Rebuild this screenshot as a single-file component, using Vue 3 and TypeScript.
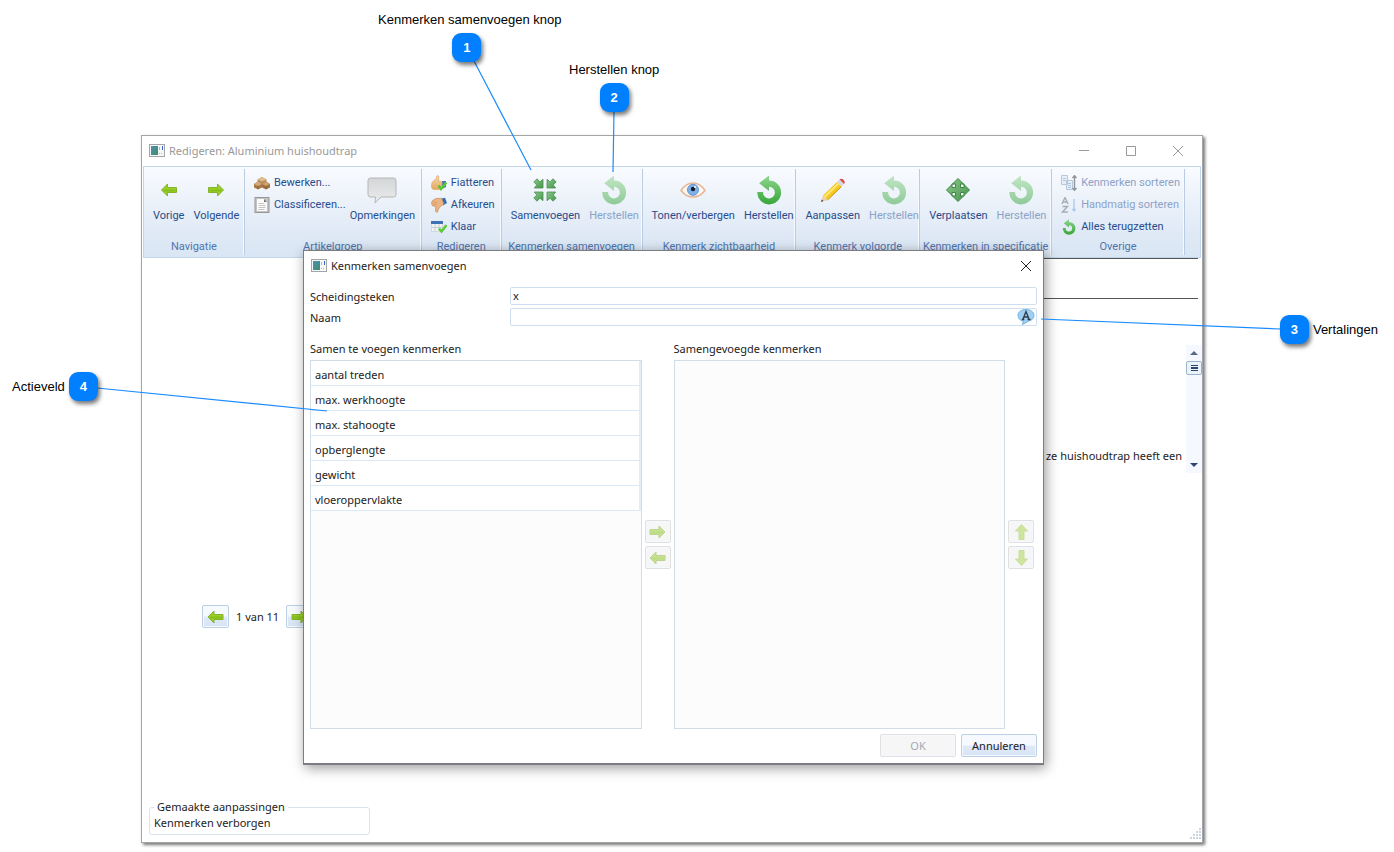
<script setup lang="ts">
import { ref } from 'vue'

interface Tool {
  icon: string
  label: string
  disabled?: boolean
}
interface Group {
  title: string
  small: Tool[]
  large: Tool[]
  name: string
}
interface Callout {
  n: number
  text: string
  place: string
}

const groups: Group[] = [
  {
    title: 'Navigatie',
    name: 'nav',
    small: [],
    large: [
      { icon: 'left', label: 'Vorige' },
      { icon: 'right', label: 'Volgende' },
    ],
  },
  {
    title: 'Artikelgroep',
    name: 'article-group',
    small: [
      { icon: 'boxes', label: 'Bewerken...' },
      { icon: 'doc', label: 'Classificeren...' },
    ],
    large: [{ icon: 'bubble', label: 'Opmerkingen' }],
  },
  {
    title: 'Redigeren',
    name: 'edit',
    small: [
      { icon: 'thumb-up', label: 'Fiatteren' },
      { icon: 'thumb-down', label: 'Afkeuren' },
      { icon: 'done', label: 'Klaar' },
    ],
    large: [],
  },
  {
    title: 'Kenmerken samenvoegen',
    name: 'merge',
    small: [],
    large: [
      { icon: 'merge', label: 'Samenvoegen' },
      { icon: 'undo', label: 'Herstellen', disabled: true },
    ],
  },
  {
    title: 'Kenmerk zichtbaarheid',
    name: 'visible',
    small: [],
    large: [
      { icon: 'eye', label: 'Tonen/verbergen' },
      { icon: 'undo', label: 'Herstellen' },
    ],
  },
  {
    title: 'Kenmerk volgorde',
    name: 'order',
    small: [],
    large: [
      { icon: 'pencil', label: 'Aanpassen' },
      { icon: 'undo', label: 'Herstellen', disabled: true },
    ],
  },
  {
    title: 'Kenmerken in specificatie',
    name: 'spec',
    small: [],
    large: [
      { icon: 'move', label: 'Verplaatsen' },
      { icon: 'undo', label: 'Herstellen', disabled: true },
    ],
  },
  {
    title: 'Overige',
    name: 'other',
    small: [
      { icon: 'sort', label: 'Kenmerken sorteren', disabled: true },
      { icon: 'az', label: 'Handmatig sorteren', disabled: true },
      { icon: 'undo', label: 'Alles terugzetten' },
    ],
    large: [],
  },
]

const features: string[] = [
  'aantal treden',
  'max. werkhoogte',
  'max. stahoogte',
  'opberglengte',
  'gewicht',
  'vloeroppervlakte',
]

const callouts: Callout[] = [
  { n: 1, text: 'Kenmerken samenvoegen knop', place: 'c1' },
  { n: 2, text: 'Herstellen knop', place: 'c2' },
  { n: 3, text: 'Vertalingen', place: 'c3' },
  { n: 4, text: 'Actieveld', place: 'c4' },
]

const separator = ref('x')
const featureName = ref('')
</script>

<template>
  <main class="page">
    <svg class="defs" width="0" height="0" aria-hidden="true">
      <defs>
        <linearGradient id="g-green" x1="0" y1="0" x2="0" y2="1">
          <stop offset="0" stop-color="#8fd68d" />
          <stop offset="1" stop-color="#38a53a" />
        </linearGradient>
        <linearGradient id="g-dark" x1="0" y1="0" x2="1" y2="1">
          <stop offset="0" stop-color="#8bca8b" />
          <stop offset="1" stop-color="#44934a" />
        </linearGradient>
        <linearGradient id="g-grey" x1="0" y1="0" x2="0" y2="1">
          <stop offset="0" stop-color="#d3d5d7" />
          <stop offset="1" stop-color="#ececec" />
        </linearGradient>
        <linearGradient id="g-skin" x1="0" y1="0" x2="0" y2="1">
          <stop offset="0" stop-color="#fbd9a5" />
          <stop offset="1" stop-color="#e3a863" />
        </linearGradient>
        <linearGradient id="g-teal" x1="0" y1="0" x2="1" y2="1">
          <stop offset="0" stop-color="#4f8fb5" />
          <stop offset="1" stop-color="#3f8d68" />
        </linearGradient>
      </defs>
      <symbol id="i-app" viewBox="0 0 16 14">
        <rect x=".5" y=".5" width="15" height="12" fill="#f7f7f7" stroke="#a2a6aa" />
        <rect x="2" y="2" width="7" height="9" fill="url(#g-teal)" />
        <path d="M10.500 3v3" stroke="#9fb7d8" />
        <path d="M13.500 2v4" stroke="#3d67c4" />
        <path d="M10 9.500h4" stroke="#a9c2a9" stroke-dasharray="1 1" />
      </symbol>
      <symbol id="i-right" viewBox="0 0 16 16">
        <path d="M15.500 8 9.500 2v3.500h-9v5h9V14z" fill="#98cf2a" stroke="#85b32b" />
        <path d="M1.500 8.500h12" stroke="#86bf18" stroke-width="2" />
      </symbol>
      <symbol id="i-left" viewBox="0 0 16 16">
        <path d="M.5 8 6.500 2v3.500h9v5h-9V14z" fill="#98cf2a" stroke="#85b32b" />
        <path d="M2.500 8.500h12" stroke="#86bf18" stroke-width="2" />
      </symbol>
      <symbol id="i-up" viewBox="0 0 16 16">
        <path d="M8 .5 2 7h3.500v8.500h5V7H14z" fill="#a8d64a" stroke="#9cc44e" />
      </symbol>
      <symbol id="i-down" viewBox="0 0 16 16">
        <path d="M8 15.500 2 9h3.500V.5h5V9H14z" fill="#a8d64a" stroke="#9cc44e" />
      </symbol>
      <symbol id="i-boxes" viewBox="0 0 16 16">
        <path d="m3.500 4.500 4.500-2.500 4.500 2.500v4L8 11 3.500 8.500z" fill="#b98b58" />
        <path d="m3.500 4.500 4.500 2 4.500-2L8 2z" fill="#ddbb8e" />
        <path d="m0 9 4-2.500L8 9v3.500l-4 2-4-2z" fill="#a97843" />
        <path d="m0 9 4 2 4-2-4-2.500z" fill="#d3aa77" />
        <path d="m8 9 4-2.500L16 9v3.500l-4 2-4-2z" fill="#a07040" />
        <path d="m8 9 4 2 4-2-4-2.500z" fill="#cba06d" />
        <path d="M4 11v3M12 11v3" stroke="#85603a" />
      </symbol>
      <symbol id="i-doc" viewBox="0 0 16 16">
        <rect x="1" y=".5" width="14" height="15" fill="#c4c4c4" stroke="#979797" />
        <path d="M3 2h7l3 3v9H3z" fill="#fbfbfb" />
        <path d="M10 2v3h3z" fill="#777" />
        <path d="M4.500 6.500h6M4.500 8.500h7M4.500 10.500h7M4.500 12.500h6" stroke="#c4c4c4" />
      </symbol>
      <symbol id="i-bubble" viewBox="0 0 32 32">
        <path
          d="M4.500 4h23a2.500 2.500 0 0 1 2.500 2.500v14a2.500 2.500 0 0 1-2.500 2.500H15l-6 6 .5-6h-5A2.500 2.500 0 0 1 2 20.500v-14A2.500 2.500 0 0 1 4.500 4z"
          fill="url(#g-grey)"
          stroke="#b4b6b8"
        />
      </symbol>
      <symbol id="i-thumb-up" viewBox="0 0 16 16">
        <path d="M11 6h4v6l-4 2z" fill="#417ab9" />
        <path
          d="M6 .8c1.500-.5 2 .7 1.700 2L7.300 5.500 11 7v5.500l-3 2H3c-1.800 0-2.500-1.500-2.500-3.500S1 6.500 3 5.500C5 4.500 5.500 2.500 6 .8z"
          fill="url(#g-skin)"
          stroke="#dda666"
          stroke-width=".7"
        />
        <path d="m7.500 10.500 2.500 3.500 5.500-6.500" fill="none" stroke="#55c835" stroke-width="2.500" />
      </symbol>
      <symbol id="i-thumb-down" viewBox="0 0 16 16">
        <path d="M10.500 1.500 14 .7 16 6l-4 2.500z" fill="#356fb0" />
        <path
          d="M1.500 3.500 5 1.500l5.500-.3L12.800 7 9.500 9.500 7.500 12 6.500 15c-1.300.7-2.300-.3-2-2L5 9.500 2 9C.3 8 .2 5 1.500 3.500z"
          fill="#eab483"
          stroke="#c98c5c"
          stroke-width=".7"
        />
        <path d="M2 5.300h4M2 7.300h4" stroke="#cf9464" stroke-width=".7" />
      </symbol>
      <symbol id="i-done" viewBox="0 0 16 16">
        <path d="M.5 4.500h11v8H.5z" fill="#f0f2f4" stroke="#d2d7dd" />
        <path d="M4 5v7M8 5v7M1 8.500h10" stroke="#c7ccd2" />
        <path d="M0 2h12v3H0z" fill="#3d70b5" />
        <path d="m8 9.500 2.500 3L15.500 6" fill="none" stroke="#5ccb3c" stroke-width="2.500" />
      </symbol>
      <symbol id="i-merge" viewBox="0 0 24 24">
        <g fill="url(#g-dark)" stroke="#4c9150" stroke-width=".8">
          <path d="M.8 4 4 .8l3 3 3-2.500V10H1.300l2.500-3z" />
          <path d="M23.200 4 20 .8l-3 3-3-2.500V10h8.700l-2.500-3z" />
          <path d="M.8 20 4 23.200l3-3 3 2.500V14H1.300l2.500 3z" />
          <path d="m23.200 20-3.200 3.200-3-3-3 2.500V14h8.700l-2.500 3z" />
        </g>
      </symbol>
      <symbol id="i-undo" viewBox="0 0 32 32">
        <path
          d="M3.500 18h6.200A6.300 6.300 0 1 0 16 12.500V17L5.500 8.700 16 .5V6a12.700 12.700 0 1 1-12.500 12z"
          fill="url(#g-green)"
        />
      </symbol>
      <symbol id="i-eye" viewBox="0 0 26 18">
        <path d="M1 9.500Q6 2 13 2t12 7.500Q20 16 13 16T1 9.500z" fill="#fdf6f1" stroke="#e6b695" stroke-width="1.600" />
        <circle cx="13" cy="8.800" r="5.500" fill="#7fb0e6" stroke="#6294d2" />
        <circle cx="13" cy="8" r="2.200" fill="#131c2b" />
        <circle cx="15" cy="6" r="1" fill="#fff" />
      </symbol>
      <symbol id="i-pencil" viewBox="0 0 26 26">
        <path d="m1 25 2-6.500 4.500 4.500z" fill="#e9cfa4" />
        <path d="m1 25 .8-2.500L3.500 24z" fill="#444" />
        <path d="M3 18.500 17 5l4.500 4.500L7.500 23z" fill="#f5c91f" />
        <path d="M4.500 20 18.500 6.500" stroke="#fde67a" stroke-width="2" />
        <path d="M7.500 23 21.500 9.500" stroke="#c98f13" />
        <path d="m17 5 2.500-2.500L24 7l-2.500 2.500z" fill="#d5d8dc" />
        <path d="M19.500 2.500C21.500-.2 26.500 4 24 7z" fill="#e04d55" />
      </symbol>
      <symbol id="i-move" viewBox="0 0 24 24">
        <path
          d="m12 .5 5.500 5.500h-3v3.500H18v-3l5.500 5.500-5.500 5.500v-3h-3.500V18h3L12 23.500 6.500 18h3v-3.500H6v3L.5 12 6 6.500v3h3.500V6h-3z"
          fill="url(#g-dark)"
          stroke="#3f8443"
        />
        <path d="m5.500 7 2.500-2M18.500 7 16 5M5.500 17 8 19M18.500 17 16 19" stroke="#4f9a52" stroke-width="1.500" />
      </symbol>
      <symbol id="i-sort" viewBox="0 0 16 16">
        <path d="M.5.5h6v9h-6zM5.500 5.500h6v9h-6z" fill="#dbe9f7" stroke="#7f98b2" />
        <path d="M2 3.500h3M2 5.500h3M7 8.500h3M7 10.500h3M7 12.500h3" stroke="#5f97d3" />
        <path d="M13.500 1v14M11.500 3l2-2.300 2 2.300M11.500 13l2 2.300 2-2.300" fill="none" stroke="#33383e" stroke-width="1.400" />
      </symbol>
      <symbol id="i-az" viewBox="0 0 16 16">
        <path d="m1 7 3-6.500L7 7M2.200 5h3.600M1.500 9.500h5L1.500 15h5.300" fill="none" stroke="#666b70" stroke-width="1.400" />
        <path d="M13 2v11M11.500 12l1.500 2 1.500-2" fill="none" stroke="#6ba2e6" stroke-width="1.300" />
      </symbol>
      <symbol id="i-translate" viewBox="0 0 18 16">
        <path d="M9 .5c4.700 0 8 2.500 8 6 0 3-2.500 5-5.500 5.700L5.500 15.500l1-3.300C3 11.500 1 9.500 1 6.500c0-3.500 3.300-6 8-6z" fill="#9fd0f3" stroke="#72b2e0" />
        <path d="m5.800 10.500 3.200-8 3.200 8M7 8h4M4.800 10.500h2.500M10.500 10.500h3" fill="none" stroke="#2d3b49" stroke-width="1.300" />
      </symbol>
      <symbol id="i-close" viewBox="0 0 12 12">
        <path d="m1 1 10 10M11 1 1 11" fill="none" stroke="currentColor" />
      </symbol>
    </svg>

    <section class="window">
      <header class="titlebar">
        <svg class="app-icon"><use href="#i-app" /></svg>
        <h1>Redigeren: Aluminium huishoudtrap</h1>
        <div class="win-buttons">
          <button type="button" aria-label="Minimaliseren">
            <svg width="12" height="12"><path d="M1 5.500h10" stroke="currentColor" /></svg>
          </button>
          <button type="button" aria-label="Maximaliseren">
            <svg width="12" height="12"><path d="M1.500 1.500h9v9h-9z" fill="none" stroke="currentColor" /></svg>
          </button>
          <button type="button" aria-label="Sluiten">
            <svg width="12" height="12"><use href="#i-close" /></svg>
          </button>
        </div>
      </header>

      <nav class="ribbon">
        <section v-for="g in groups" :key="g.name" class="group" :class="g.name">
          <div class="tools">
            <div v-if="g.small.length" class="small-tools">
              <button v-for="t in g.small" :key="t.label" type="button" class="small" :disabled="t.disabled">
                <svg><use :href="'#i-' + t.icon" /></svg>
                <span>{{ t.label }}</span>
              </button>
            </div>
            <button v-for="t in g.large" :key="t.label" type="button" class="large" :disabled="t.disabled">
              <span class="pic"><svg :class="'p-' + t.icon"><use :href="'#i-' + t.icon" /></svg></span>
              <span>{{ t.label }}</span>
            </button>
          </div>
          <h2>{{ g.title }}</h2>
        </section>
      </nav>

      <div class="content">
        <div class="side">
          <div class="pager">
            <button type="button" class="btn" aria-label="Vorige pagina"><svg><use href="#i-left" /></svg></button>
            <span>1 van 11</span>
            <button type="button" class="btn" aria-label="Volgende pagina"><svg><use href="#i-right" /></svg></button>
          </div>
        </div>
        <div class="article">
          <div class="rule-box"></div>
          <div class="text-area">
            <p>ze huishoudtrap heeft een</p>
            <div class="scrollbar">
              <svg width="8" height="5"><path d="M0 5 4 1l4 4z" fill="#56698a" /></svg>
              <span class="thumb"></span>
              <svg class="end" width="8" height="5"><path d="m0 0 4 4 4-4z" fill="#2c4570" /></svg>
            </div>
          </div>
        </div>
      </div>

      <footer class="bottom">
        <fieldset>
          <legend>Gemaakte aanpassingen</legend>
          <p>Kenmerken verborgen</p>
        </fieldset>
        <svg class="grip" width="12" height="12">
          <path
            d="M10 1h2M10 4h2M10 7h2M10 10h2M7 4h2M7 7h2M7 10h2M4 7h2M4 10h2M1 10h2"
            stroke="#ccd4e0"
            stroke-width="2"
          />
        </svg>
      </footer>

      <section class="dialog" role="dialog" aria-labelledby="dialog-title">
        <header class="dialog-head">
          <svg class="app-icon"><use href="#i-app" /></svg>
          <h2 id="dialog-title">Kenmerken samenvoegen</h2>
          <button type="button" aria-label="Sluiten"><svg width="12" height="12"><use href="#i-close" /></svg></button>
        </header>
        <form class="form" @submit.prevent>
          <label for="sep">Scheidingsteken</label>
          <div class="field"><input id="sep" v-model="separator" type="text" /></div>
          <label for="name">Naam</label>
          <div class="field">
            <input id="name" v-model="featureName" type="text" />
            <button type="button" aria-label="Vertalingen"><svg width="18" height="16"><use href="#i-translate" /></svg></button>
          </div>
        </form>
        <div class="lists">
          <h3>Samen te voegen kenmerken</h3>
          <h3 class="second">Samengevoegde kenmerken</h3>
          <ul class="list">
            <li v-for="f in features" :key="f">{{ f }}</li>
          </ul>
          <div class="movers">
            <button type="button" class="btn" disabled aria-label="Toevoegen"><svg><use href="#i-right" /></svg></button>
            <button type="button" class="btn" disabled aria-label="Verwijderen"><svg><use href="#i-left" /></svg></button>
          </div>
          <ul class="list"></ul>
          <div class="movers">
            <button type="button" class="btn" disabled aria-label="Omhoog"><svg><use href="#i-up" /></svg></button>
            <button type="button" class="btn" disabled aria-label="Omlaag"><svg><use href="#i-down" /></svg></button>
          </div>
        </div>
        <footer class="actions">
          <button type="button" class="btn" disabled>OK</button>
          <button type="button" class="btn">Annuleren</button>
        </footer>
      </section>
    </section>

    <svg class="lines" aria-hidden="true">
      <path d="M474 61 531 170M614 111 613 172M1041 319 1281 329M97 388 327 411" stroke="#1a8cff" stroke-width="1.200" />
    </svg>
    <div v-for="c in callouts" :key="c.n" class="callout" :class="c.place">
      <span>{{ c.text }}</span>
      <b>{{ c.n }}</b>
    </div>
  </main>
</template>

<style>
body {
  margin: 0;
  background: #fff;
}
</style>

<style scoped>
* {
  box-sizing: border-box;
}
.page {
  position: relative;
  display: flex;
  min-height: 100vh;
  padding: 135px 191px 9px 141px;
  font: 11px/16px "Noto Sans", "Open Sans", sans-serif;
  color: #222;
}
.defs,
.lines {
  position: absolute;
}
.lines {
  inset: 0;
  width: 100%;
  height: 100%;
  pointer-events: none;
}
h1,
h2,
h3,
p,
ul {
  margin: 0;
  padding: 0;
  font-size: 11px;
  font-weight: 400;
  list-style: none;
}
button {
  margin: 0;
  padding: 0;
  border: 0;
  background: none;
  font: inherit;
  color: inherit;
  white-space: nowrap;
}
svg {
  display: block;
  flex: none;
}
.window {
  position: relative;
  display: flex;
  flex: 1;
  flex-direction: column;
  min-width: 0;
  border: 1px solid #a3a5a8;
  background: #fff;
  box-shadow: 2px 2px 3px #777;
}
.titlebar {
  display: flex;
  align-items: center;
  height: 30px;
  padding-left: 7px;
  color: #999;
}
.app-icon {
  width: 16px;
  height: 14px;
  margin-right: 4px;
}
.win-buttons {
  display: flex;
  gap: 35px;
  margin-left: auto;
  padding-right: 18px;
}
.ribbon {
  display: grid;
  grid-template-columns: 101fr 177fr 80fr 141fr 154fr 124fr 132fr 133fr 15fr;
  height: 92px;
  margin: 0 1px;
  padding: 2px 0;
  border: 1px solid #c3d5ea;
  background: linear-gradient(#f9fbff, #e9f0f9 45%, #dfe9f6 75%, #dae6f4);
  font-family: Roboto, "Noto Sans", sans-serif;
}
.group {
  display: flex;
  flex-direction: column;
  min-width: 0;
  border-right: 1px solid #b9cce2;
  box-shadow: inset -1px 0 #f6faff;
  color: #274c8c;
  white-space: nowrap;
}
.group h2 {
  margin-top: auto;
  line-height: 16px;
  text-align: center;
  color: #4f74ae;
}
.tools {
  display: flex;
  gap: 9px;
  padding: 3px 0 0 9px;
}
.article-group .tools {
  gap: 4px;
}
.large {
  display: flex;
  flex-direction: column;
  align-items: center;
}
.pic {
  display: flex;
  align-items: center;
  justify-content: center;
  height: 36px;
}
.pic svg {
  width: 24px;
  height: 24px;
}
.pic .p-left,
.pic .p-right {
  width: 16px;
  height: 16px;
}
.pic .p-undo {
  width: 30px;
  height: 30px;
}
.pic .p-bubble {
  width: 32px;
  height: 32px;
}
.pic .p-eye {
  width: 26px;
  height: 18px;
}
.pic .p-pencil {
  width: 26px;
  height: 26px;
}
.small {
  display: flex;
  align-items: center;
  gap: 4px;
  height: 22px;
}
.small svg {
  width: 16px;
  height: 16px;
}
button:disabled span {
  color: #8ca2c6;
}
button:disabled svg {
  opacity: 0.5;
}
.content {
  display: flex;
  flex: 1;
}
.side {
  width: 180px;
  padding: 347px 0 0 60px;
}
.pager {
  display: flex;
  align-items: center;
  gap: 7px;
  white-space: nowrap;
}
.btn {
  display: flex;
  align-items: center;
  justify-content: center;
  width: 27px;
  height: 23px;
  border: 1px solid #bccfe4;
  border-radius: 2px;
  background: linear-gradient(#f6faff 45%, #dfe9f7 55%, #d7e4f5);
  box-shadow: inset 0 0 0 1px #f4f9ff;
}
.btn svg {
  width: 17px;
  height: 16px;
}
.btn:disabled {
  border-color: #e0e0e0;
  background: #f6f6f6;
  color: #a4a9b0;
}
.article {
  display: flex;
  flex: 1;
  flex-direction: column;
  min-width: 0;
}
.rule-box {
  height: 41px;
  margin-right: 4px;
  border: solid #555;
  border-width: 1px 0;
}
.text-area {
  display: flex;
  justify-content: flex-end;
  height: 128px;
  margin-top: 46px;
}
.text-area p {
  align-self: flex-end;
  padding: 0 4px 9px 0;
}
.scrollbar {
  display: flex;
  flex-direction: column;
  align-items: center;
  width: 16px;
  padding: 5px 0;
  background: #f5f9ff;
}
.thumb {
  width: 16px;
  height: 14px;
  margin-top: 6px;
  border: 1px solid #9cb3d0;
  border-radius: 2px;
  background: linear-gradient(#2c4570, #2c4570) 4px 3px / 7px 1px no-repeat,
    linear-gradient(#2c4570, #2c4570) 4px 5px / 7px 2px no-repeat,
    linear-gradient(#2c4570, #2c4570) 4px 8px / 7px 1px no-repeat, #eaf2fc;
}
.end {
  margin-top: auto;
}
.bottom {
  display: flex;
  align-items: flex-end;
  justify-content: space-between;
  padding: 0 1px 0 7px;
}
fieldset {
  width: 221px;
  margin: 0 0 7px;
  padding: 0 4px 3px;
  border: 1px solid #d8e3ee;
  border-radius: 3px;
}
legend {
  padding: 0 3px;
}
.grip {
  margin-bottom: 2px;
}
.dialog {
  position: absolute;
  top: 114px;
  right: 158px;
  left: 161px;
  padding: 0 6px 6px;
  border: 1px solid #7c7d80;
  border-bottom-width: 2px;
  background: #fff;
  box-shadow: 2px 3px 12px #0006;
}
.dialog-head {
  display: flex;
  align-items: center;
  height: 30px;
  padding-left: 1px;
}
.dialog-head button {
  margin: 0 5px 0 auto;
}
.form {
  display: grid;
  grid-template-columns: 200px 1fr;
  row-gap: 1px;
  padding-top: 6px;
}
.form label {
  line-height: 20px;
}
.field {
  display: flex;
  align-items: center;
  height: 18px;
  border: 1px solid #d0dfef;
  border-radius: 2px;
}
.field input {
  flex: 1;
  min-width: 0;
  padding: 0 2px;
  border: 0;
  outline: 0;
  background: none;
  font: inherit;
  color: inherit;
}
.field button {
  margin-right: 1px;
}
.lists {
  display: grid;
  grid-template-columns: 1fr 26px 1fr 29px;
  column-gap: 3px;
  padding-top: 11px;
}
.lists h3 {
  padding-bottom: 1px;
  line-height: 20px;
}
.lists .second {
  grid-column: 3 / 5;
}
.list {
  min-height: 369px;
  border: 1px solid #d3dde8;
  background: #fcfcfc;
}
.list li {
  height: 25px;
  padding-left: 4px;
  border-right: 2px solid #e4edf7;
  border-bottom: 1px solid #dae9f8;
  background: #fff;
  line-height: 28px;
}
.movers {
  display: flex;
  flex-direction: column;
  gap: 3px;
  padding-top: 160px;
}
.movers .btn {
  width: 26px;
}
.actions {
  display: flex;
  justify-content: flex-end;
  gap: 5px;
  padding-top: 5px;
}
.actions .btn {
  width: 76px;
}
.callout {
  position: absolute;
  display: flex;
  flex-direction: column;
  align-items: center;
  gap: 4px;
  font: 13px/18px "Liberation Sans", Arial, sans-serif;
  color: #000;
  white-space: nowrap;
}
.callout b {
  width: 29px;
  height: 29px;
  border-radius: 9px;
  background: #0080ff;
  box-shadow: 2px 3px 4px #0008;
  line-height: 29px;
  text-align: center;
  color: #fff;
}
.c1 {
  top: 11px;
  left: 378px;
}
.c2 {
  top: 61px;
  left: 569px;
}
.c3 {
  top: 315px;
  right: 16px;
  flex-direction: row-reverse;
}
.c4 {
  top: 372px;
  left: 12px;
  flex-direction: row;
}
.c1 b {
  margin-right: 6px;
}
</style>
